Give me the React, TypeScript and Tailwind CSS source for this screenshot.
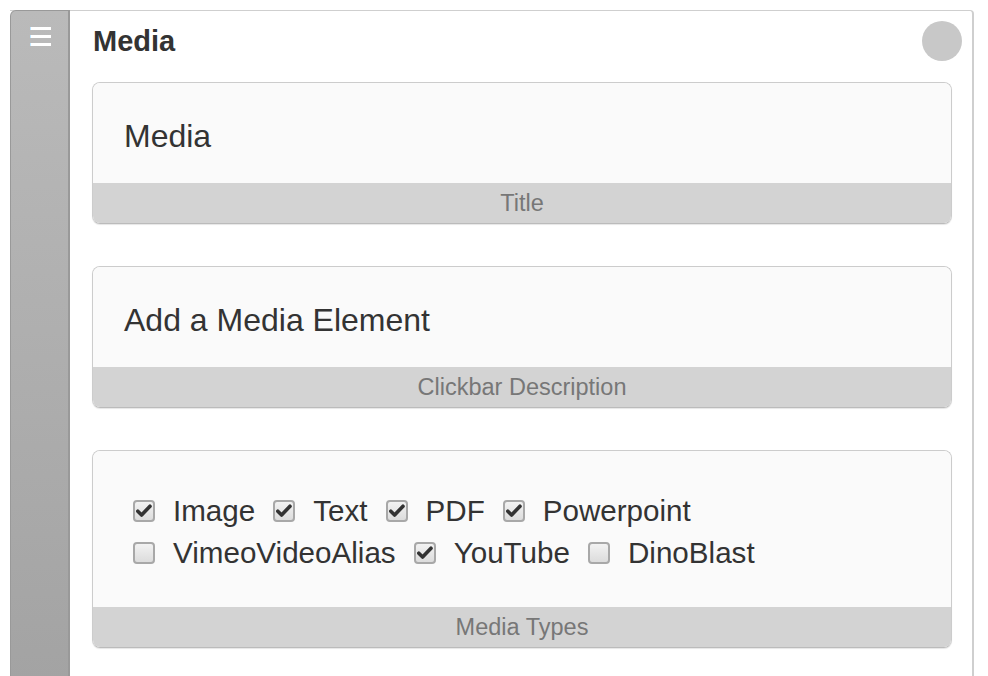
import { ReactNode } from 'react'

const font = { fontFamily: '"Liberation Sans", Arial, sans-serif' }

function Checkbox({ checked }: { checked: boolean }) {
  return (
    <span className="w-[22px] h-[22px] shrink-0 rounded-[4px] border-2 border-[#a8a8a8] bg-gradient-to-b from-[#f2f2f2] to-[#dcdcdc] flex items-center justify-center">
      {checked && (
        <svg width="16" height="14" viewBox="0 0 16 14">
          <path d="M1.8 7.2 L5.6 11 L14 2.2" fill="none" stroke="#333" strokeWidth="3.6" strokeLinecap="round" strokeLinejoin="round" />
        </svg>
      )}
    </span>
  )
}

function Option({ label, checked }: { label: string; checked: boolean }) {
  return (
    <label className="flex items-center gap-[18px] mr-[18px]">
      <Checkbox checked={checked} />
      <span className="text-[29.6px] leading-[42px] text-[#333]">{label}</span>
    </label>
  )
}

function Field({ label, children, bodyClass }: { label: string; children: ReactNode; bodyClass: string }) {
  return (
    <div className="rounded-[8px] border border-[#cccccc] border-b-[#bbbbbb] overflow-hidden shadow-[0_1px_1px_rgba(0,0,0,0.1)]">
      <div className={`bg-[#fafafa] pl-[31px] ${bodyClass}`}>{children}</div>
      <div className="bg-[#d3d3d3] h-[40px] pt-[2px] flex items-center justify-center text-[23.5px] text-[#777]">{label}</div>
    </div>
  )
}

export default function App() {
  const row1 = [
    { label: 'Image', checked: true },
    { label: 'Text', checked: true },
    { label: 'PDF', checked: true },
    { label: 'Powerpoint', checked: true },
  ]
  const row2 = [
    { label: 'VimeoVideoAlias', checked: false },
    { label: 'YouTube', checked: true },
    { label: 'DinoBlast', checked: false },
  ]

  return (
    <div className="w-[988px] h-[676px] bg-white pt-[10px] pl-[10px] pr-[14px] overflow-hidden" style={font}>
      <div className="flex h-[700px] border-t border-r-2 border-[#cfcfcf] rounded-tr-[4px]">
        {/* sidebar */}
        <div className="w-[60px] shrink-0 -mt-px rounded-tl-[6px] border-l border-t border-[#999] border-r-2 border-r-[#999] bg-gradient-to-b from-[#bababa] to-[#a2a2a2] flex justify-center pt-[16px]">
          <div className="flex flex-col gap-[5px] pl-[2px]">
            <span className="block w-[20px] h-[3px] bg-white shadow-[-1px_0_0_#bfe6ff]" />
            <span className="block w-[20px] h-[3px] bg-white shadow-[-1px_0_0_#bfe6ff]" />
            <span className="block w-[20px] h-[3px] bg-white shadow-[-1px_0_0_#bfe6ff]" />
          </div>
        </div>

        {/* content */}
        <div className="flex-1 pl-[22px] pr-[20px]">
          <div className="flex items-start justify-between h-[71px] pt-[10px]">
            <h1 className="text-[29px] leading-[33px] font-bold text-[#333] pl-px pt-[4px]">Media</h1>
            <span className="w-[40px] h-[40px] rounded-full bg-[#c8c8c8] -mr-[10px]" />
          </div>

          <div className="flex flex-col gap-[42px]">
            <Field label="Title" bodyClass="h-[100px] flex items-center pt-[6px]">
              <span className="text-[32px] text-[#333]">Media</span>
            </Field>

            <Field label="Clickbar Description" bodyClass="h-[100px] flex items-center pt-[6px]">
              <span className="text-[32px] text-[#333]">Add a Media Element</span>
            </Field>

            <Field label="Media Types" bodyClass="h-[156px] pt-[39px] pl-[40px]">
              <div className="flex items-center">
                {row1.map(o => (
                  <Option key={o.label} {...o} />
                ))}
              </div>
              <div className="flex items-center">
                {row2.map(o => (
                  <Option key={o.label} {...o} />
                ))}
              </div>
            </Field>
          </div>
        </div>
      </div>
    </div>
  )
}
